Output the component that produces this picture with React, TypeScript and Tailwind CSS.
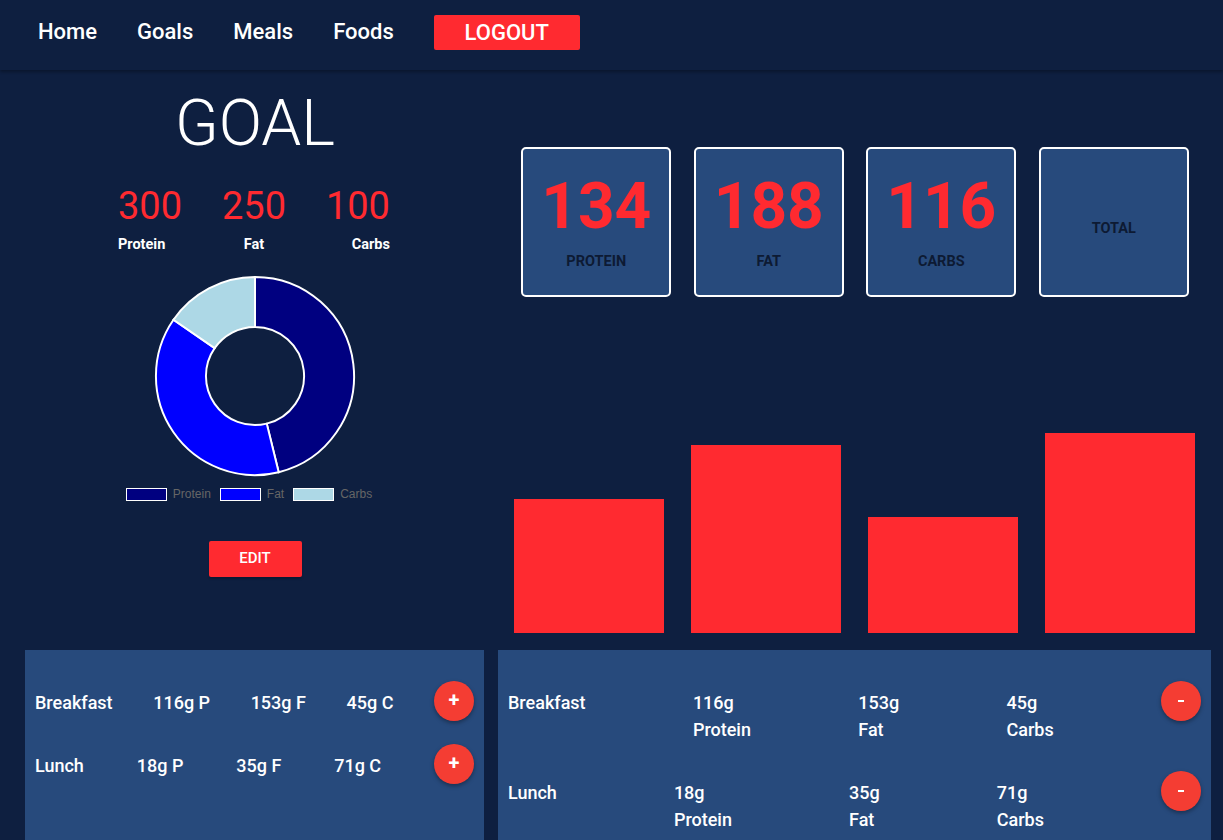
import React from "react";

const RED = "bg-[#ff2a30]";

const goals = [
  { value: 300, label: "Protein", align: "text-left" },
  { value: 250, label: "Fat", align: "text-center" },
  { value: 100, label: "Carbs", align: "text-right" },
];

const totals = [
  { value: "134", label: "PROTEIN" },
  { value: "188", label: "FAT" },
  { value: "116", label: "CARBS" },
];

const bars = [134, 188, 116, 200];

const meals = [
  { name: "Breakfast", p: 116, f: 153, c: 45 },
  { name: "Lunch", p: 18, f: 35, c: 71 },
];

function Nav() {
  return (
    <nav className="h-[70px] flex items-start pt-[15px] pl-[38px] gap-[40px] shadow-[0_2px_3px_rgba(0,0,0,0.3)] relative">
      {["Home", "Goals", "Meals", "Foods"].map((item) => (
        <a key={item} className="h-[35px] flex items-center pb-[3px] text-[22px] font-medium text-white cursor-pointer">
          {item}
        </a>
      ))}
      <button className={`${RED} w-[146px] h-[35px] rounded-[2px] text-white text-[22px] font-medium leading-none`}>
        LOGOUT
      </button>
    </nav>
  );
}

function Donut() {
  return (
    <svg width="206" height="206" viewBox="-2 -2 210 210" className="block mx-auto">
      <path
        d="M103 2 A101 101 0 0 1 127.17 201.06 L114.97 151.55 A50 50 0 0 0 103 53 Z"
        fill="#000080"
        stroke="#fff"
        strokeWidth="2"
      />
      <path
        d="M127.17 201.06 A101 101 0 0 1 19.88 45.62 L61.85 74.59 A50 50 0 0 0 114.97 151.55 Z"
        fill="#0000ff"
        stroke="#fff"
        strokeWidth="2"
      />
      <path
        d="M19.88 45.62 A101 101 0 0 1 103 2 L103 53 A50 50 0 0 0 61.85 74.59 Z"
        fill="#add8e6"
        stroke="#fff"
        strokeWidth="2"
      />
    </svg>
  );
}

function Legend() {
  const items = [
    { label: "Protein", color: "bg-[#000080]" },
    { label: "Fat", color: "bg-[#0000ff]" },
    { label: "Carbs", color: "bg-[#add8e6]" },
  ];
  return (
    <div className="flex justify-center items-center gap-[9px] pr-[12px] font-['Liberation_Sans',sans-serif] text-[12px] text-[#666] leading-none">
      {items.map((it) => (
        <div key={it.label} className="flex items-center gap-[6px]">
          <span className={`w-[41px] h-[13px] border border-white ${it.color}`} />
          <span>{it.label}</span>
        </div>
      ))}
    </div>
  );
}

function GoalColumn() {
  return (
    <div className="w-[510px] flex flex-col items-center">
      <h1 className="mt-[22px] text-[64px] font-light text-white leading-none">GOAL</h1>
      <div className="mt-[31px] w-[274px] grid grid-cols-3 pr-[2px]">
        {goals.map((g) => (
          <div key={g.label} className={g.align}>
            <div className="text-[38px] leading-none text-[#ff2a30]">{g.value}</div>
            <div className="mt-[13px] text-[14.5px] leading-none font-bold text-white">{g.label}</div>
          </div>
        ))}
      </div>
      <div className="mt-[20px]">
        <Donut />
      </div>
      <div className="mt-[9px]">
        <Legend />
      </div>
      <button className={`${RED} mt-[40px] w-[93px] h-[36px] rounded-[2px] text-white text-[15px] font-medium shadow-[0_2px_2px_rgba(0,0,0,0.2)]`}>
        EDIT
      </button>
    </div>
  );
}

function StatsColumn() {
  return (
    <div className="flex-1 flex flex-col">
      <div className="mt-[77px] w-[690px] grid grid-cols-4">
        {totals.map((t) => (
          <div key={t.label} className="flex justify-center">
            <div className="w-[150px] h-[150px] rounded-[5px] border-2 border-white bg-[#274a7c] flex flex-col items-center pt-[26px]">
              <div className="text-[64px] leading-none font-bold text-[#ff2a30]">{t.value}</div>
              <div className="mt-[16px] text-[14.5px] leading-none font-bold text-[#0d1a33]">{t.label}</div>
            </div>
          </div>
        ))}
        <div className="flex justify-center">
          <div className="w-[150px] h-[150px] rounded-[5px] border-2 border-white bg-[#274a7c] flex flex-col items-center justify-center pt-[14px]">
            <div className="text-[14.5px] leading-none font-bold text-[#0d1a33]">TOTAL</div>
          </div>
        </div>
      </div>
      <div className="mt-[136px] ml-[4px] h-[200px] flex items-end gap-[27px]">
        {bars.map((h, i) => (
          <div key={i} className={`w-[150px] ${RED}`} style={{ height: h }} />
        ))}
      </div>
    </div>
  );
}

function Fab({ sign }: { sign: string }) {
  return (
    <button className="w-[40px] h-[40px] shrink-0 rounded-full bg-[#f43d33] text-white font-bold leading-none flex items-center justify-center shadow-[0_2px_4px_rgba(0,0,0,0.35)]">
      {sign === "+" ? <span className="text-[20px] -mt-[2px]">+</span> : <span className="block w-[6px] h-[2px] bg-white" />}
    </button>
  );
}

function MealsPanel() {
  return (
    <div className="w-[459px] h-[200px] bg-[#274a7c] pt-[31px] px-[10px] flex flex-col gap-[23px]">
      {meals.map((m) => (
        <div key={m.name} className="flex items-center justify-between text-[18px] font-medium text-white">
          <span className="pt-[3px]">{m.name}</span>
          <span className="pt-[3px]">{m.p}g P</span>
          <span className="pt-[3px]">{m.f}g F</span>
          <span className="pt-[3px]">{m.c}g C</span>
          <Fab sign="+" />
        </div>
      ))}
    </div>
  );
}

function EatenPanel() {
  return (
    <div className="w-[713px] h-[200px] bg-[#274a7c] pt-[31px] px-[10px] flex flex-col gap-[28px]">
      {meals.map((m) => (
        <div key={m.name} className="flex items-start justify-between text-[18px] font-medium text-white leading-[27px]">
          <div className="pt-[8px]">{m.name}</div>
          <div className="pt-[8px]">
            <div>{m.p}g</div>
            <div>Protein</div>
          </div>
          <div className="pt-[8px]">
            <div>{m.f}g</div>
            <div>Fat</div>
          </div>
          <div className="pt-[8px]">
            <div>{m.c}g</div>
            <div>Carbs</div>
          </div>
          <Fab sign="-" />
        </div>
      ))}
    </div>
  );
}

export default function App() {
  return (
    <div className="min-h-screen h-[840px] overflow-hidden bg-[#0e1f40] font-['Roboto',sans-serif]">
      <Nav />
      <div className="flex">
        <GoalColumn />
        <StatsColumn />
      </div>
      <div className="mt-[17px] flex pl-[25px] gap-[14px]">
        <MealsPanel />
        <EatenPanel />
      </div>
    </div>
  );
}
